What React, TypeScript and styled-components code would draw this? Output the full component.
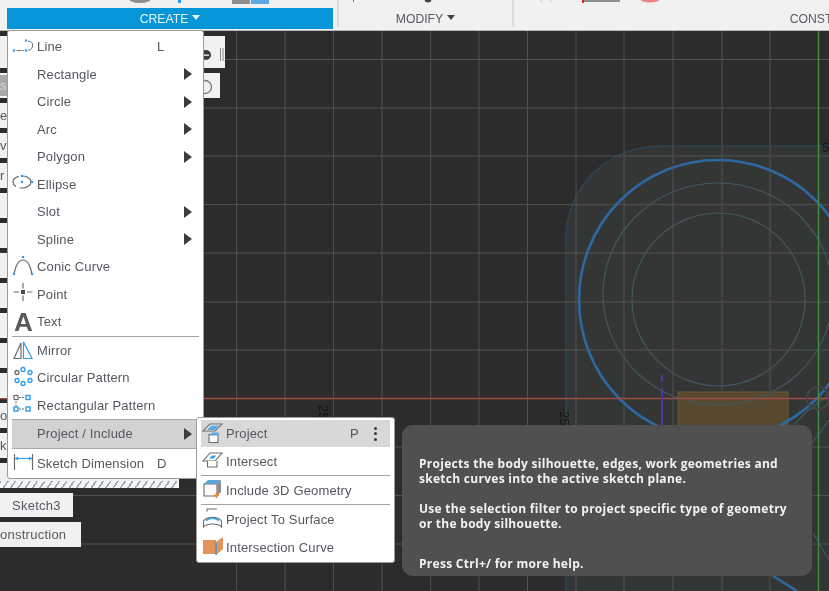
import React from "react";
import styled, { createGlobalStyle } from "styled-components";

const Global = createGlobalStyle`
  html, body { margin: 0; padding: 0; background: #2c2c2c; }
  #root { width: 829px; height: 591px; overflow: hidden; }
`;

const FONT = `"Liberation Sans", Arial, sans-serif`;

const Page = styled.div`
  position: relative;
  width: 829px;
  height: 591px;
  overflow: hidden;
  font-family: ${FONT};
  filter: blur(0.45px);
`;

/* ---------- toolbar ---------- */
const Toolbar = styled.header`
  display: flex;
  height: 30px;
  padding-left: 7px;
  background: #f1f1f1;
  border-bottom: 1px solid #b9b9b9;
  overflow: hidden;
`;
const Group = styled.div<{ $w: number }>`
  flex: 0 0 ${(p) => p.$w}px;
  display: flex;
  flex-direction: column;
`;
const Strip = styled.svg`
  display: block;
  flex: 0 0 8px;
  width: 100%;
  height: 8px;
`;
const GroupLabel = styled.div<{ $active?: boolean }>`
  flex: 0 0 21px;
  display: flex;
  align-items: center;
  justify-content: center;
  gap: 4px;
  font-size: 12.2px;
  color: ${(p) => (p.$active ? "#e6f4fc" : "#555a60")};
  background: ${(p) => (p.$active ? "#0696d7" : "transparent")};
`;
const Caret = styled.span<{ $light?: boolean }>`
  display: inline-block;
  width: 0;
  height: 0;
  margin-top: -3px;
  border-left: 4px solid transparent;
  border-right: 4px solid transparent;
  border-top: 5px solid ${(p) => (p.$light ? "#e6f4fc" : "#444")};
`;
const Separator = styled.div<{ $ml: number }>`
  flex: 0 0 2px;
  margin-left: ${(p) => p.$ml}px;
  height: 27px;
  background: #dcdcdc;
`;

/* ---------- viewport ---------- */
const Viewport = styled.svg`
  display: block;
  width: 829px;
  height: 560px;
`;

const xs = [236.6, 285, 333.6, 382, 430.6, 479, 527.5, 576, 624, 673, 722, 770];
const ys = [59.5, 108, 156, 204.6, 253, 302, 350, 447, 495.5, 544];

const Scene = () => (
  <Viewport viewBox="0 31 829 560">
    <rect x="0" y="31" width="829" height="560" fill="#2c2c2c" />
    <path d="M566 600 V238 A94 92 0 0 1 660 146 H840 V600 Z" fill="#343636" stroke="#2d4552" strokeWidth="1.4" />
    {xs.map((x) => (
      <line key={x} x1={x} x2={x} y1="31" y2="591" stroke="#505050" strokeWidth="1" />
    ))}
    {ys.map((y) => (
      <line key={y} x1="0" x2="829" y1={y} y2={y} stroke="#505050" strokeWidth="1" />
    ))}
    <rect x="678" y="392" width="110" height="60" fill="#57492f" stroke="#6a5a35" />
    <ellipse cx="718" cy="300" rx="139" ry="140" fill="none" stroke="#2f68a0" strokeWidth="2.6" />
    <ellipse cx="718" cy="294" rx="115" ry="111" fill="none" stroke="#41585f" strokeWidth="1.2" />
    <ellipse cx="718.5" cy="299.5" rx="86.5" ry="86.5" fill="none" stroke="#41585f" strokeWidth="1.2" />
    <path d="M773 576 L797 591" stroke="#2f68a0" strokeWidth="2.6" fill="none" />
    <path d="M790 430 Q805 410 829 395 M812 443 L829 420 M813 533 L829 560" stroke="#41585f" strokeWidth="1.2" fill="none" />
    <line x1="0" x2="829" y1="398.5" y2="398.5" stroke="#a04c46" strokeWidth="1.4" />
    <line x1="818.5" x2="818.5" y1="31" y2="591" stroke="#3f8f45" strokeWidth="1.4" />
    <line x1="662" x2="662" y1="375" y2="426" stroke="#4a3a9a" strokeWidth="2" strokeDasharray="7 6 40" />
    <circle cx="818" cy="398" r="11" fill="none" stroke="#444" strokeWidth="2" />
    <text x="0" y="0" transform="translate(560 407) rotate(90)" fill="#161616" fontSize="13" fontFamily={FONT}>-25</text>
    <text x="0" y="0" transform="translate(319 405) rotate(90)" fill="#161616" fontSize="13" fontFamily={FONT}>25</text>
    <text x="822" y="152" fill="#161616" fontSize="13" fontFamily={FONT}>5</text>
  </Viewport>
);

/* ---------- browser tree behind the menu ---------- */
const Tree = styled.aside`
  position: absolute;
  left: 0;
  top: 36px;
  display: flex;
  flex-direction: column;
  gap: 5px;
`;
const TreeRow = styled.div<{ $w: number; $h: number }>`
  width: ${(p) => p.$w}px;
  height: ${(p) => p.$h}px;
  background: #f1f1f1;
  display: flex;
  align-items: center;
  justify-content: space-between;
  font-size: 13px;
  letter-spacing: 0.25px;
  color: #555a60;
  white-space: nowrap;
  overflow: hidden;
  flex: none;
`;
const TreeText = styled.span<{ $shift?: number }>`
  margin-left: ${(p) => p.$shift ?? 0}px;
`;
const TreeMark = styled.span`
  background: #a9a9a9;
  color: #d9d9d9;
  padding: 3px 60px 3px 0;
`;
const TreeIcons = styled.svg`
  flex: none;
  width: 24px;
  height: 24px;
`;
const Hatch = styled.div`
  width: 179px;
  height: 25px;
  flex: none;
  background:
    repeating-linear-gradient(125deg, #9aa7b5 0 1.5px, #f6f6f6 1.5px 6px) bottom / 100% 7px no-repeat,
    #f1f1f1;
`;
const TreeButton = styled(TreeRow)`
  justify-content: flex-start;
`;

const treeLabels = ["e", "v", "r", "", "", "", "", "", "", "", "o", "k"];

const TreePanel = () => (
  <Tree>
    <TreeRow $w={225} $h={32}>
      <span />
      <TreeIcons viewBox="0 0 24 24">
        <circle cx="5" cy="15" r="5" fill="#3c3c3c" />
        <rect x="2" y="14.5" width="6" height="1.4" fill="#eee" />
        <path d="M19.5 8 V21 M22 8 V21" stroke="#8a8a8a" strokeWidth="1" />
      </TreeIcons>
    </TreeRow>
    <TreeRow $w={220} $h={25}>
      <TreeMark>sc</TreeMark>
      <TreeIcons viewBox="0 0 24 24">
        <circle cx="9" cy="13" r="6.5" fill="none" stroke="#777" strokeWidth="1.3" />
      </TreeIcons>
    </TreeRow>
    {treeLabels.map((t, i) => (
      <TreeRow key={i} $w={180} $h={25}>
        <TreeText>{t}</TreeText>
      </TreeRow>
    ))}
    <Hatch />
    <TreeButton $w={73} $h={24}>
      <TreeText $shift={12}>Sketch3</TreeText>
    </TreeButton>
    <TreeButton $w={81} $h={25}>
      <TreeText>onstruction</TreeText>
    </TreeButton>
  </Tree>
);

/* ---------- icons ---------- */
const IconSvg = styled.svg`
  display: block;
  width: 24px;
  height: 22px;
  overflow: visible;
`;
const GRAY = "#6c6c6c";
const BLUE = "#2b9bf0";
const Dot = ({ x, y }: { x: number; y: number }) => <rect x={x - 1.1} y={y - 1.1} width="2.2" height="2.2" fill={BLUE} />;

const LineIcon = () => (
  <IconSvg viewBox="0 0 24 22">
    <path d="M4.5 14.5H12" stroke={GRAY} strokeDasharray="5 1" fill="none" />
    <path d="M16 5.2C22 4.5 22.5 13.5 16 14.2" stroke={GRAY} fill="none" />
    <Dot x={2} y={14.5} />
    <Dot x={14} y={14.5} />
    <Dot x={14} y={4.5} />
  </IconSvg>
);
const EllipseIcon = () => (
  <IconSvg viewBox="0 0 24 22">
    <ellipse cx="10" cy="9" rx="9" ry="6" fill="none" stroke={GRAY} strokeWidth="1.2" strokeDasharray="14 4" />
    <Dot x={10} y={3} />
    <Dot x={10} y={9} />
    <Dot x={20} y={9} />
  </IconSvg>
);
const ConicIcon = () => (
  <IconSvg viewBox="0 0 24 22">
    <path d="M2 18C4 8 7 4 11 4C15 4 18 8 20 18" fill="none" stroke={GRAY} strokeWidth="1.2" />
    <Dot x={11} y={1} />
    <Dot x={2} y={18} />
    <Dot x={20} y={18} />
  </IconSvg>
);
const PointIcon = () => (
  <IconSvg viewBox="0 0 24 22">
    <path d="M1.5 9H7M15 9H20.5M11 0V5.5M11 12.5V18" stroke={GRAY} strokeWidth="1.2" />
    <rect x="9" y="7" width="4" height="4" fill="#4a4a4a" />
  </IconSvg>
);
const TextGlyph = styled.span`
  display: block;
  width: 24px;
  padding-left: 2px;
  font-size: 26px;
  line-height: 22px;
  font-weight: 700;
  color: #5a5a5a;
`;
const MirrorIcon = () => (
  <IconSvg viewBox="0 0 24 22">
    <path d="M2 19.5H9V4Z" fill="none" stroke={GRAY} strokeWidth="1.2" />
    <path d="M11.5 19.5H20L11.5 3Z" fill="none" stroke={BLUE} strokeWidth="1.2" />
  </IconSvg>
);
const CircularIcon = () => (
  <IconSvg viewBox="0 0 24 22">
    {[
      [5, 5.5, GRAY],
      [11, 2.5, BLUE],
      [18, 5.5, BLUE],
      [18, 13.5, BLUE],
      [11, 16.5, BLUE],
      [5, 13.5, BLUE],
    ].map(([x, y, c], i) => (
      <circle key={i} cx={x as number} cy={y as number} r="2" fill="none" stroke={c as string} strokeWidth="1.3" />
    ))}
  </IconSvg>
);
const RectPatternIcon = () => (
  <IconSvg viewBox="0 0 24 22">
    <path d="M7 3.5H13M4 7V12M7 15H13" stroke={GRAY} strokeDasharray="2 1" />
    <rect x="2" y="1.5" width="4" height="4" fill="none" stroke={GRAY} strokeWidth="1.2" />
    <rect x="14" y="1.5" width="4" height="4" fill="none" stroke={BLUE} strokeWidth="1.4" />
    <rect x="2" y="13" width="4" height="4" fill="none" stroke={BLUE} strokeWidth="1.4" />
    <rect x="14" y="13" width="4" height="4" fill="none" stroke={BLUE} strokeWidth="1.4" />
  </IconSvg>
);
const DimensionIcon = () => (
  <IconSvg viewBox="0 0 24 22">
    <path d="M2.5 2V18M20.5 2V18" stroke={GRAY} strokeWidth="1.2" />
    <path d="M3 6.5H20" stroke={BLUE} strokeWidth="1.2" />
    <path d="M3 6.5L6 4.5V8.5ZM20 6.5L17 4.5V8.5Z" fill={BLUE} />
  </IconSvg>
);
const ProjectIcon = () => (
  <IconSvg viewBox="0 0 24 22">
    <path d="M2 8L9 1H21L14 8Z" fill="#f2f2f2" stroke={GRAY} strokeWidth="1.1" />
    <path d="M6 7L10 2.5H18L14 7Z" fill="#58a9e6" />
    <path d="M8 11.5H17V19.5H8Z" fill="#fafafa" stroke={GRAY} strokeWidth="1.1" />
    <path d="M8.5 12.5L11 9.5H18L16.5 12.5Z" fill="#58a9e6" />
  </IconSvg>
);
const IntersectIcon = () => (
  <IconSvg viewBox="0 0 24 22">
    <path d="M2 11L9 3H21L14 11Z" fill="#fff" stroke={GRAY} strokeWidth="1.1" />
    <path d="M8 8.5L11 5.5H15L13 8.5Z" fill="#3b9ee8" />
    <path d="M6.5 11V17H16V11" fill="#fff" stroke={GRAY} strokeWidth="1.1" />
  </IconSvg>
);
const IncludeIcon = () => (
  <IconSvg viewBox="0 0 24 22">
    <path d="M3 5H16V17H3Z" fill="#fafafa" stroke={GRAY} strokeWidth="1.1" />
    <path d="M3 5L7 1H20L16 5Z" fill="#58a3dc" />
    <path d="M16 5L20 1V13L16 17Z" fill="#8d8d8d" />
    <path d="M15.5 13.5V19M13 16.3H18" stroke="#ee8a33" strokeWidth="1.6" />
  </IconSvg>
);
const SurfaceIcon = () => (
  <IconSvg viewBox="0 0 24 22">
    <path d="M6 3.5V1H16" fill="none" stroke={GRAY} strokeWidth="1.1" />
    <path d="M2.5 19V13C6 8 17 8 20.5 13V19C17 15 6 15 2.5 19Z" fill="#fff" stroke={GRAY} strokeWidth="1.1" />
    <path d="M5 12.5C9 9.5 14 9.5 18 12.5" fill="none" stroke="#3b9ee8" strokeWidth="1.6" />
  </IconSvg>
);
const CurveIcon = () => (
  <IconSvg viewBox="0 0 24 22">
    <path d="M2 4H15V18H2Z" fill="#e2945a" />
    <path d="M15 6L22 1V13L15 19Z" fill="#e2945a" />
    <path d="M15 6V19" stroke="#3b9ee8" strokeWidth="1.4" />
  </IconSvg>
);

/* ---------- menus ---------- */
const Menu = styled.nav<{ $left: number; $top: number; $w: number; $h: number }>`
  position: absolute;
  left: ${(p) => p.$left}px;
  top: ${(p) => p.$top}px;
  width: ${(p) => p.$w}px;
  height: ${(p) => p.$h}px;
  box-sizing: border-box;
  padding: 2px 4px 0;
  background: #fff;
  border: 1px solid #9a9a9a;
  border-radius: 3px;
  color: #54585f;
  font-size: 13px;
  letter-spacing: 0.15px;
  white-space: nowrap;
`;
const MainRow = styled.div<{ $h?: number; $on?: boolean }>`
  display: grid;
  grid-template-columns: 25px 120px 24px 1fr;
  align-items: center;
  height: ${(p) => p.$h ?? 27.5}px;
  background: ${(p) => (p.$on ? "#d2d2d2" : "transparent")};
  box-shadow: ${(p) => (p.$on ? "inset 0 -1px #a8a8a8, inset 0 1px #a8a8a8" : "none")};
`;
const SubRow = styled(MainRow)`
  grid-template-columns: 25px 124px 22px 1fr;
  box-shadow: none;
  background: ${(p) => (p.$on ? "#d8d8d8" : "transparent")};
`;
const Arrow = styled.span`
  justify-self: end;
  margin-right: 7px;
  width: 0;
  height: 0;
  border-top: 6px solid transparent;
  border-bottom: 6px solid transparent;
  border-left: 8px solid #3d3d3d;
`;
const Dots = styled.span`
  display: flex;
  flex-direction: column;
  gap: 2.5px;
  width: 3px;
  margin-left: 2px;
`;
const DotMark = styled.i`
  display: block;
  width: 3px;
  height: 3px;
  border-radius: 50%;
  background: #3a3a3a;
`;
const Divider = styled.hr`
  margin: 0;
  border: 0;
  height: 1px;
  background: #a3a3a3;
`;

type Item = { label: string; icon?: React.ReactNode; key?: string; sub?: boolean; on?: boolean; h?: number };

const topItems: Item[] = [
  { label: "Line", icon: <LineIcon />, key: "L" },
  { label: "Rectangle", sub: true },
  { label: "Circle", sub: true },
  { label: "Arc", sub: true },
  { label: "Polygon", sub: true },
  { label: "Ellipse", icon: <EllipseIcon /> },
  { label: "Slot", sub: true },
  { label: "Spline", sub: true },
  { label: "Conic Curve", icon: <ConicIcon /> },
  { label: "Point", icon: <PointIcon /> },
  { label: "Text", icon: <TextGlyph>A</TextGlyph> },
];
const bottomItems: Item[] = [
  { label: "Mirror", icon: <MirrorIcon /> },
  { label: "Circular Pattern", icon: <CircularIcon /> },
  { label: "Rectangular Pattern", icon: <RectPatternIcon /> },
  { label: "Project / Include", sub: true, on: true, h: 29.5 },
  { label: "Sketch Dimension", icon: <DimensionIcon />, key: "D", h: 29 },
];

const renderMain = (it: Item) => (
  <MainRow key={it.label} $h={it.h} $on={it.on}>
    <span>{it.icon}</span>
    <span>{it.label}</span>
    <span>{it.key}</span>
    {it.sub ? <Arrow /> : <span />}
  </MainRow>
);

const CreateMenu = () => (
  <Menu $left={7} $top={30} $w={197} $h={449}>
    {topItems.map(renderMain)}
    <Divider />
    {bottomItems.map(renderMain)}
  </Menu>
);

const ProjectMenu = () => (
  <Menu $left={196} $top={417} $w={199} $h={146}>
    <SubRow $h={27} $on>
      <ProjectIcon />
      <span>Project</span>
      <span>P</span>
      <Dots>
        <DotMark />
        <DotMark />
        <DotMark />
      </Dots>
    </SubRow>
    <SubRow $h={28}>
      <IntersectIcon />
      <span>Intersect</span>
    </SubRow>
    <Divider />
    <SubRow $h={28}>
      <IncludeIcon />
      <span>Include 3D Geometry</span>
    </SubRow>
    <Divider />
    <SubRow $h={28}>
      <SurfaceIcon />
      <span>Project To Surface</span>
    </SubRow>
    <SubRow $h={28}>
      <CurveIcon />
      <span>Intersection Curve</span>
    </SubRow>
  </Menu>
);

/* ---------- tooltip ---------- */
const Tooltip = styled.aside`
  position: absolute;
  left: 402px;
  top: 425px;
  width: 410px;
  height: 151px;
  box-sizing: border-box;
  padding: 31px 17px 0;
  background: #505050;
  border-radius: 11px;
  color: #f2f2f2;
  font-family: "Open Sans", sans-serif;
  font-weight: 700;
  font-size: 12px;
  letter-spacing: 0.28px;
  line-height: 15px;
  white-space: nowrap;
`;
const TipPara = styled.p<{ $gap?: number }>`
  margin: 0 0 ${(p) => p.$gap ?? 15}px;
`;

export default function App() {
  return (
    <Page>
      <Global />
      <Toolbar>
        <Group $w={326}>
          <Strip viewBox="0 0 326 8">
            <ellipse cx="133" cy="-1" rx="11" ry="4" fill="#8c8c8c" />
            <rect x="171" y="0" width="3" height="3" fill="#2b9bf0" />
            <rect x="225" y="0" width="18" height="4" fill="#8f8f8f" />
            <rect x="244" y="0" width="18" height="4" fill="#5aa9e6" />
          </Strip>
          <GroupLabel $active>
            CREATE <Caret $light />
          </GroupLabel>
        </Group>
        <Separator $ml={4} />
        <Group $w={173}>
          <Strip viewBox="0 0 173 8">
            <rect x="14" y="0" width="1" height="2" fill="#777" />
            <circle cx="89" cy="-1" r="3.5" fill="#444" />
          </Strip>
          <GroupLabel>
            MODIFY <Caret />
          </GroupLabel>
        </Group>
        <Separator $ml={0} />
        <Group $w={640}>
          <Strip viewBox="0 0 640 8">
            <path d="M26 0L28 2M36 0L37 2" stroke="#f2b0b0" />
            <rect x="68" y="0" width="2" height="3" fill="#d22" />
            <rect x="70" y="0" width="36" height="2" fill="#8f8f8f" />
            <ellipse cx="136" cy="-1" rx="10" ry="3.5" fill="#e98585" />
          </Strip>
          <GroupLabel>
            CONSTRUCT <Caret />
          </GroupLabel>
        </Group>
      </Toolbar>
      <Scene />
      <TreePanel />
      <CreateMenu />
      <ProjectMenu />
      <Tooltip>
        <TipPara>
          Projects the body silhouette, edges, work geometries and
          <br />
          sketch curves into the active sketch plane.
        </TipPara>
        <TipPara $gap={25}>
          Use the selection filter to project specific type of geometry
          <br />
          or the body silhouette.
        </TipPara>
        <TipPara>Press Ctrl+/ for more help.</TipPara>
      </Tooltip>
    </Page>
  );
}
